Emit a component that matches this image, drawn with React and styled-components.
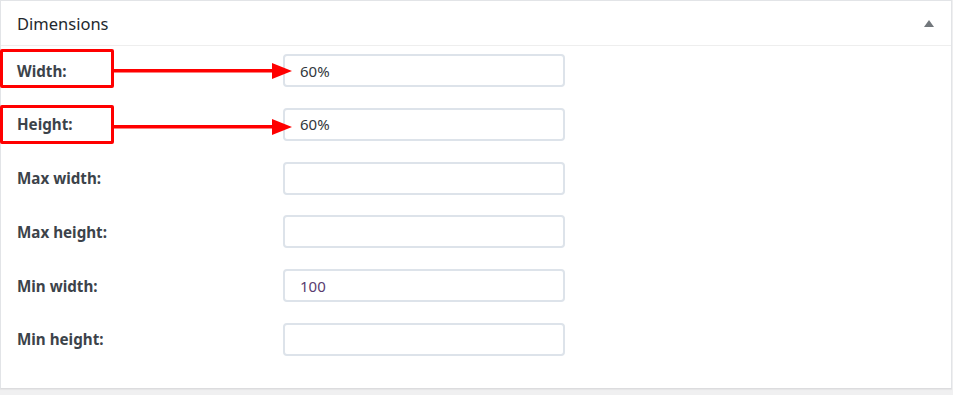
import React from "react";
import styled, { createGlobalStyle } from "styled-components";

const Global = createGlobalStyle`
  html, body { margin: 0; padding: 0; background: #f0f0f1; }
  body { font-family: "Noto Sans", "Open Sans", sans-serif; }
`;

const Page = styled.div`
  width: 953px;
  height: 395px;
  position: relative;
  overflow: hidden;
`;

const Panel = styled.section`
  width: 952px;
  height: 389px;
  box-sizing: border-box;
  background: #fff;
  border: 1px solid #e2e4e7;
  border-bottom-color: #dcdcde;
  box-shadow: 0 1px 1px rgba(0, 0, 0, 0.04);
`;

const Header = styled.header`
  height: 44px;
  display: flex;
  align-items: center;
  justify-content: space-between;
  padding: 0 16px;
  border-bottom: 1px solid #eeeeee;
`;

const Title = styled.h2`
  margin: 0;
  font-size: 16.5px;
  font-weight: 400;
  color: #23282d;
`;

const Toggle = styled.span`
  width: 0;
  height: 0;
  border-left: 5px solid transparent;
  border-right: 5px solid transparent;
  border-bottom: 7px solid #72777c;
  margin-right: 1px;
  margin-top: 1px;
`;

const Body = styled.div`
  display: grid;
  grid-template-columns: 266px 282px;
  row-gap: 20.8px;
  padding: 8px 16px 0;
  align-items: center;
`;

const Label = styled.label`
  font-size: 15.2px;
  font-weight: 700;
  color: #3c434a;
  letter-spacing: 0;
`;

const Input = styled.div`
  height: 33px;
  box-sizing: border-box;
  border: 2px solid #dde3ea;
  border-radius: 4px;
  padding: 0 15px;
  display: flex;
  align-items: center;
  font-size: 15px;
  color: ${(p) => (p.$purple ? "#5a3d70" : "#32373c")};
`;

const Highlight = styled.div`
  position: absolute;
  left: 0;
  top: ${(p) => p.$top}px;
  width: 114px;
  height: 39px;
  box-sizing: border-box;
  border: 3px solid #ff0000;
  border-radius: 2px;
`;

const Arrow = styled.svg`
  position: absolute;
  left: 112px;
  top: ${(p) => p.$top}px;
`;

const rows = [
  { label: "Width:", value: "60%" },
  { label: "Height:", value: "60%" },
  { label: "Max width:", value: "" },
  { label: "Max height:", value: "" },
  { label: "Min width:", value: "100", purple: true },
  { label: "Min height:", value: "" },
];

export default function App() {
  return (
    <Page>
      <Global />
      <Panel>
        <Header>
          <Title>Dimensions</Title>
          <Toggle />
        </Header>
        <Body>
          {rows.map((r) => (
            <React.Fragment key={r.label}>
              <Label>{r.label}</Label>
              <Input $purple={r.purple}>{r.value}</Input>
            </React.Fragment>
          ))}
        </Body>
      </Panel>
      <Highlight $top={49} />
      <Highlight $top={105} />
      {[62, 118].map((t) => (
        <Arrow key={t} $top={t} width="182" height="18" viewBox="0 0 182 18">
          <rect x="0" y="7" width="164" height="3.5" fill="#ff0000" />
          <polygon points="160,1 180,9 160,17" fill="#ff0000" />
        </Arrow>
      ))}
    </Page>
  );
}
